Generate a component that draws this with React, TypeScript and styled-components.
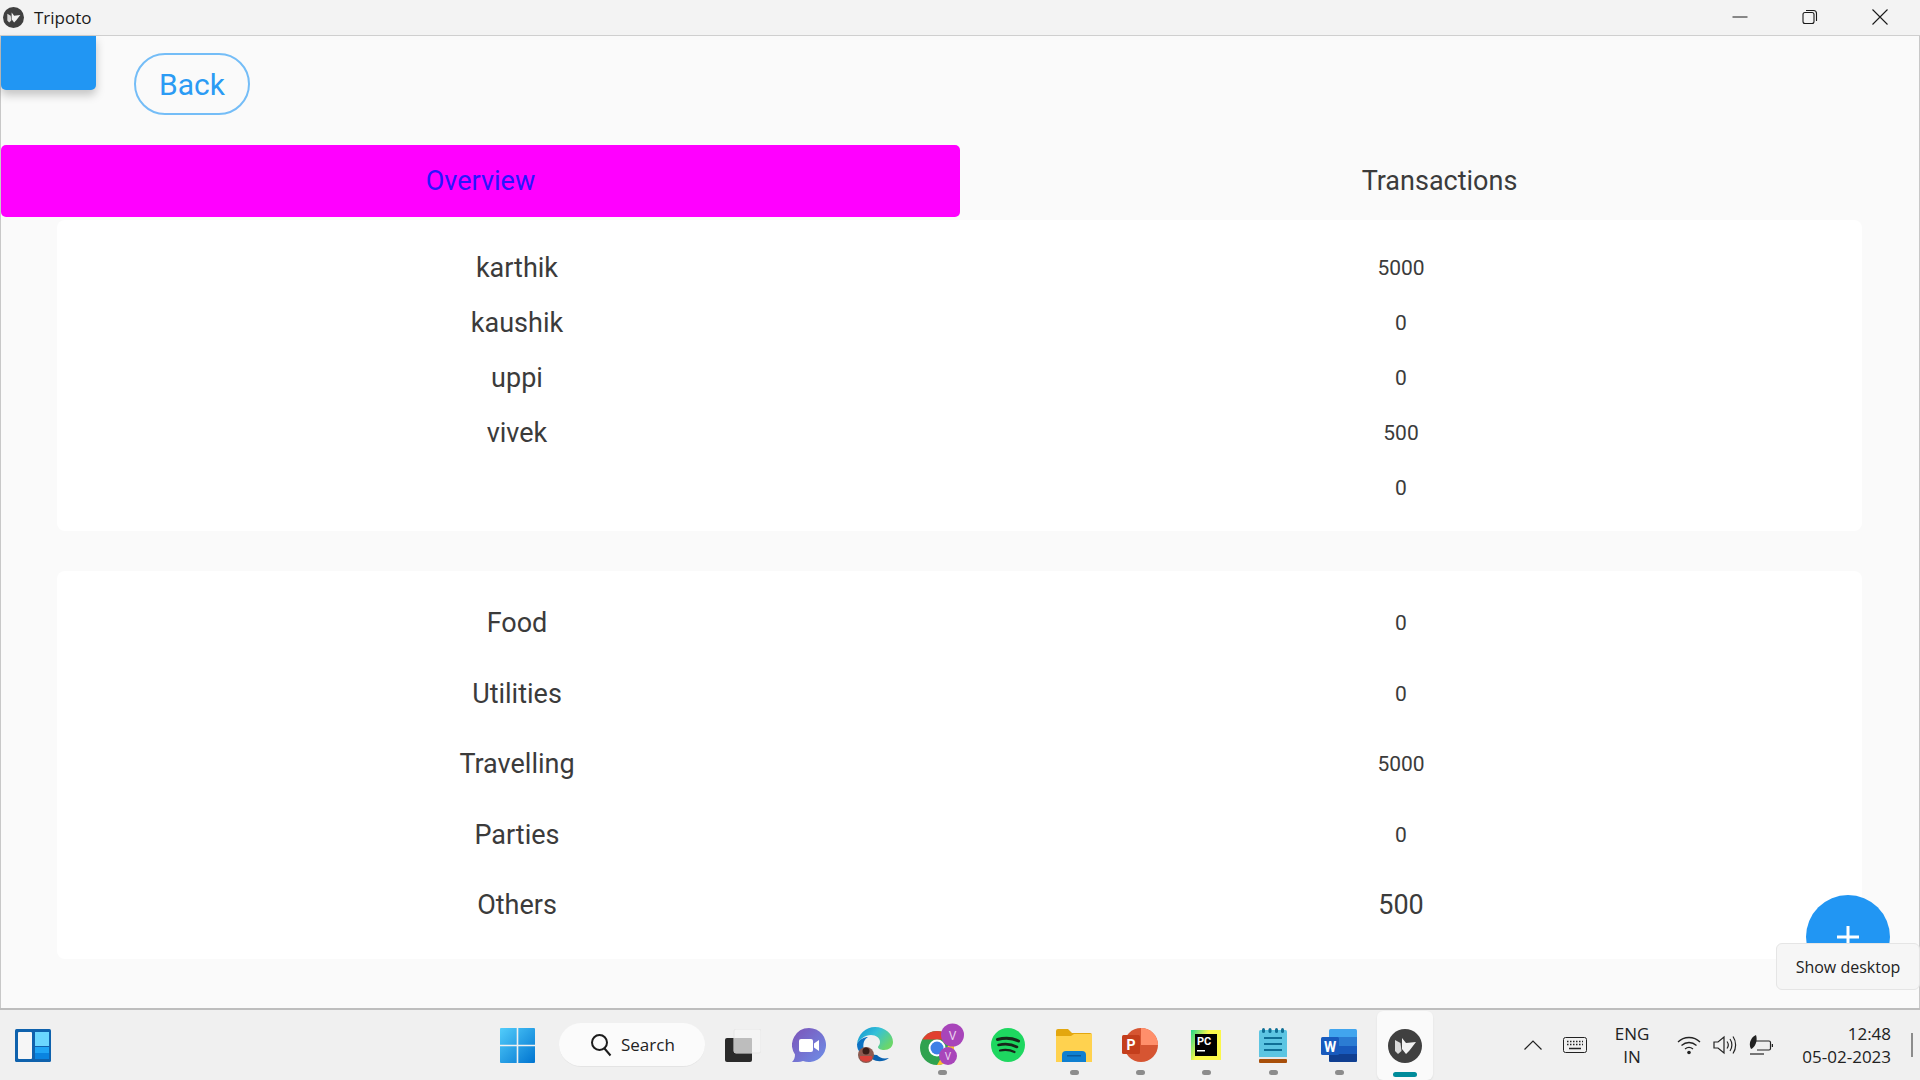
import React from "react";
import styled, { createGlobalStyle } from "styled-components";

const GlobalStyle = createGlobalStyle`
  html, body {
    margin: 0;
    padding: 0;
    background: #fafafa;
    overflow: hidden;
  }
  * { box-sizing: border-box; }
`;

const people = [
  { name: "karthik", amount: "5000" },
  { name: "kaushik", amount: "0" },
  { name: "uppi", amount: "0" },
  { name: "vivek", amount: "500" },
  { name: "", amount: "0" },
];

const categories = [
  { name: "Food", amount: "0" },
  { name: "Utilities", amount: "0" },
  { name: "Travelling", amount: "5000" },
  { name: "Parties", amount: "0" },
  { name: "Others", amount: "500", large: true },
];

const KivyLogo = ({ size }: { size: number }) => (
  <svg width={size} height={size} viewBox="0 0 34 34">
    <circle cx="17" cy="17" r="17" fill="#404040" />
    <path d="M7 11l5.500 3 1 8-3.500 3-3-3z" fill="#d8d8d8" />
    <path d="M14 9l4 5 10-1-6.500 8.500-3.500 3.500-4-5z" fill="#f2f2f2" />
  </svg>
);

const WidgetsIcon = () => (
  <svg width="36" height="33" viewBox="0 0 36 33">
    <rect width="36" height="33" rx="1.500" fill="#0f62ad" />
    <rect x="3" y="3" width="14" height="27" rx="1" fill="#f6f6f6" />
    <rect x="20" y="3" width="14" height="14" fill="#6bd7ff" />
    <rect x="20" y="18" width="14" height="6" fill="#1fa5f5" />
    <rect x="20" y="24" width="14" height="6" fill="#0a84e0" />
  </svg>
);

const StartIcon = () => (
  <svg width="35" height="35" viewBox="0 0 35 35">
    <defs>
      <linearGradient id="startGrad" x1="0" y1="0" x2="1" y2="1">
        <stop offset="0" stopColor="#52cdfb" />
        <stop offset="1" stopColor="#0074d0" />
      </linearGradient>
    </defs>
    <path d="M1 0h15.700v16.700H0V1a1 1 0 0 1 1-1zM18.300 0H34a1 1 0 0 1 1 1v15.700H18.300zM0 18.300h16.700V35H1a1 1 0 0 1-1-1zM18.300 18.300H35V34a1 1 0 0 1-1 1H18.300z" fill="url(#startGrad)" />
  </svg>
);

const SearchGlass = () => (
  <svg width="22" height="24" viewBox="0 0 22 24" fill="none" stroke="#1c1c1c" strokeWidth="2">
    <circle cx="9.500" cy="9.500" r="7.500" />
    <path d="M14.500 15.500l6 7" />
  </svg>
);

const TaskViewIcon = () => (
  <svg width="36" height="33" viewBox="0 0 36 33">
    <rect x="0" y="9" width="27" height="24" rx="2" fill="#2a2a2a" />
    <rect x="9" y="0" width="27" height="24" rx="2" fill="#f4f4f4" fillOpacity="0.85" stroke="#e6e6e6" />
    <rect x="9" y="9" width="18" height="15" rx="1" fill="#bdbdbd" />
  </svg>
);

const ChatIcon = () => (
  <svg width="34" height="34" viewBox="0 0 34 34">
    <defs>
      <linearGradient id="chatGrad" x1="0" y1="0" x2="1" y2="1">
        <stop offset="0" stopColor="#7d53b8" />
        <stop offset="1" stopColor="#6d8fe8" />
      </linearGradient>
    </defs>
    <path d="M17 0a17 17 0 1 1-6 32.900c-3 1.100-7 1.100-11 1.100 2-2 3-4 3-7.500A17 17 0 0 1 17 0z" fill="url(#chatGrad)" />
    <rect x="7" y="11" width="14" height="13" rx="2" fill="#fff" />
    <path d="M22 15.500l5-3.500v11l-5-3.500z" fill="#fff" />
  </svg>
);

const EdgeIcon = () => (
  <svg width="36" height="36" viewBox="0 0 36 36">
    <defs>
      <linearGradient id="edgeGrad" x1="0" y1="0" x2="1" y2="0.600">
        <stop offset="0" stopColor="#0d8fd0" />
        <stop offset="0.500" stopColor="#35c1d8" />
        <stop offset="1" stopColor="#6bd66a" />
      </linearGradient>
    </defs>
    <path d="M0 17C1 7 9 0 18 0c10 0 18 7 18 15 0 5-4 8-9 8-3 0-6-1-6-3 0-1 2-2 2-5 0-4-4-7-9-7-6 0-11 4-14 9z" fill="url(#edgeGrad)" />
    <path d="M0 17c3-5 7-7 11-7-5 3-6 9-3 16H4C1 24 0 21 0 17z" fill="#0c72c4" />
    <path d="M10 27c4 7 14 10 22 4-6 1-9 0-12-3z" fill="#0a62b0" />
    <circle cx="9" cy="28" r="8" fill="#8c5a50" />
    <path d="M3 29h12v3a8 8 0 0 1-12 0z" fill="#d8413a" />
    <circle cx="9" cy="24" r="3.500" fill="#3a1d18" />
  </svg>
);

const ChromeIcon = () => (
  <svg width="44" height="44" viewBox="0 0 44 44">
    <circle cx="17" cy="25" r="17" fill="#2fa24f" />
    <path d="M2.300 16.500A17 17 0 0 1 31.700 16.500H17z" fill="#e1402f" />
    <path d="M31.700 16.500A17 17 0 0 1 17 42l7.400-12.700 7.300-12.800z" fill="#fbc02d" />
    <circle cx="17" cy="25" r="8.500" fill="#fff" />
    <circle cx="17" cy="25" r="6.500" fill="#3d7fe6" />
    <circle cx="32.500" cy="12" r="11.500" fill="#a845ba" />
    <text x="32.500" y="16.500" textAnchor="middle" fontFamily="Roboto, sans-serif" fontSize="12" fill="#ead3ee">V</text>
    <circle cx="28" cy="33" r="9" fill="#a845ba" />
    <text x="28" y="37" textAnchor="middle" fontFamily="Roboto, sans-serif" fontSize="10" fill="#ead3ee">V</text>
  </svg>
);

const SpotifyIcon = () => (
  <svg width="34" height="34" viewBox="0 0 34 34" fill="none" stroke="#17261a" strokeLinecap="round">
    <circle cx="17" cy="17" r="17" fill="#1ed760" stroke="none" />
    <path d="M6.500 11.500c7-2 15-1.500 21 1.500" strokeWidth="3" />
    <path d="M7.500 17c6-1.500 13-1 18.500 2" strokeWidth="2.600" />
    <path d="M9 22.500c5-1 10-.7 14.500 1.500" strokeWidth="2.200" />
  </svg>
);

const ExplorerIcon = () => (
  <svg width="36" height="33" viewBox="0 0 36 33">
    <path d="M0 2a2 2 0 0 1 2-2h10l4 4h18a2 2 0 0 1 2 2v4H0z" fill="#e3a70f" />
    <path d="M0 7h15l3-2h18v28H0z" fill="#ffd24f" />
    <path d="M6 33v-7a4 4 0 0 1 4-4h16a4 4 0 0 1 4 4v7z" fill="#0f7fd0" />
    <rect x="11" y="26" width="14" height="1.500" fill="#0a5a9c" />
  </svg>
);

const PowerPointIcon = () => (
  <svg width="36" height="34" viewBox="0 0 36 34">
    <circle cx="19" cy="17" r="17" fill="#d65532" />
    <path d="M19 0a17 17 0 0 1 17 17H19z" fill="#ff8f6b" />
    <rect x="0" y="7" width="18" height="19" rx="1.500" fill="#c43e1c" />
    <text x="9" y="22" textAnchor="middle" fontFamily="Roboto, sans-serif" fontWeight="700" fontSize="14" fill="#fff">P</text>
  </svg>
);

const PyCharmIcon = () => (
  <svg width="30" height="30" viewBox="0 0 30 30">
    <defs>
      <linearGradient id="pyGrad" x1="0" y1="0" x2="1" y2="0.500">
        <stop offset="0" stopColor="#21d789" />
        <stop offset="0.500" stopColor="#fcf84a" />
      </linearGradient>
    </defs>
    <rect width="30" height="30" fill="url(#pyGrad)" />
    <rect x="4" y="4" width="22" height="22" fill="#000" />
    <text x="6" y="15" fontFamily="Roboto, sans-serif" fontWeight="700" fontSize="11" fill="#fff">PC</text>
    <rect x="6" y="20" width="8" height="1.500" fill="#fff" />
  </svg>
);

const NotepadIcon = () => (
  <svg width="28" height="35" viewBox="0 0 28 35">
    <rect x="0" y="2" width="28" height="28" rx="1.500" fill="#5cc5e2" />
    <rect x="0" y="29" width="28" height="2" fill="#e8e8e8" />
    <rect x="0" y="31" width="28" height="4" rx="1" fill="#a84f0a" />
    <g fill="#0f6f96">
      <rect x="3" y="0" width="3" height="5" rx="1.500" />
      <rect x="9.500" y="0" width="3" height="5" rx="1.500" />
      <rect x="16" y="0" width="3" height="5" rx="1.500" />
      <rect x="22" y="0" width="3" height="5" rx="1.500" />
      <rect x="5" y="9" width="18" height="2" />
      <rect x="5" y="15" width="18" height="2" />
      <rect x="5" y="21" width="18" height="2" />
    </g>
  </svg>
);

const WordIcon = () => (
  <svg width="36" height="33" viewBox="0 0 36 33">
    <rect x="8" y="0" width="28" height="33" rx="1.500" fill="#41a5ee" />
    <rect x="8" y="8" width="28" height="9" fill="#2b7cd3" />
    <rect x="8" y="17" width="28" height="8" fill="#185abd" />
    <path d="M8 25h28v6.500a1.500 1.500 0 0 1-1.500 1.500h-25A1.500 1.500 0 0 1 8 31.500z" fill="#103f91" />
    <rect x="0" y="8" width="18" height="18" rx="1.500" fill="#185abd" />
    <text x="9" y="22.500" textAnchor="middle" fontFamily="Roboto, sans-serif" fontWeight="700" fontSize="14" fill="#fff">W</text>
  </svg>
);

const dockIcons = [
  { id: "taskview", icon: <TaskViewIcon /> },
  { id: "chat", icon: <ChatIcon /> },
  { id: "edge", icon: <EdgeIcon /> },
  { id: "chrome", icon: <ChromeIcon />, running: true },
  { id: "spotify", icon: <SpotifyIcon /> },
  { id: "explorer", icon: <ExplorerIcon />, running: true },
  { id: "powerpoint", icon: <PowerPointIcon />, running: true },
  { id: "pycharm", icon: <PyCharmIcon />, running: true },
  { id: "notepad", icon: <NotepadIcon />, running: true },
  { id: "word", icon: <WordIcon />, running: true },
];

const App = () => (
  <>
    <GlobalStyle />
    <Window>
      <TitleBar>
        <KivyLogo size={21} />
        <TitleText>Tripoto</TitleText>
        <WindowControls>
          <WindowButton>
            <svg width="16" height="16" viewBox="0 0 16 16" stroke="#1a1a1a" strokeWidth="1">
              <path d="M0.500 8h15" />
            </svg>
          </WindowButton>
          <WindowButton>
            <svg width="16" height="16" viewBox="0 0 16 16" fill="none" stroke="#1a1a1a" strokeWidth="1.100">
              <rect x="1" y="3.500" width="11" height="11" rx="2" />
              <path d="M4 1.500h7.500a3 3 0 0 1 3 3V12" />
            </svg>
          </WindowButton>
          <WindowButton>
            <svg width="16" height="16" viewBox="0 0 16 16" stroke="#1a1a1a" strokeWidth="1.100">
              <path d="M0.500 0.500l15 15M15.500 0.500l-15 15" />
            </svg>
          </WindowButton>
        </WindowControls>
      </TitleBar>

      <Content>
        <TopRow>
          <RaisedButton />
          <BackButton>Back</BackButton>
        </TopRow>

        <Tabs>
          <Tab $active>Overview</Tab>
          <Tab>Transactions</Tab>
        </Tabs>

        <Cards>
          <Card $height={311} $paddingTop={20}>
            {people.map((p, i) => (
              <PersonRow key={i}>
                <Name>{p.name}</Name>
                <Amount>{p.amount}</Amount>
              </PersonRow>
            ))}
          </Card>
          <Card $height={388} $paddingTop={17}>
            {categories.map((c) => (
              <CategoryRow key={c.name}>
                <Name>{c.name}</Name>
                <Amount $large={c.large}>{c.amount}</Amount>
              </CategoryRow>
            ))}
          </Card>
        </Cards>

        <Fab>
          <svg width="22" height="22" viewBox="0 0 22 22" fill="#fff">
            <rect x="9.500" y="0" width="3" height="22" />
            <rect x="0" y="9.500" width="22" height="3" />
          </svg>
        </Fab>
        <Tooltip>Show desktop</Tooltip>
      </Content>

      <Taskbar>
        <WidgetsSlot>
          <WidgetsIcon />
        </WidgetsSlot>
        <StartSlot>
          <StartIcon />
        </StartSlot>
        <SearchPill>
          <SearchGlass />
          <span>Search</span>
        </SearchPill>
        <Dock>
          {dockIcons.map((d) => (
            <DockItem key={d.id}>
              {d.icon}
              {d.running && <RunningDot />}
            </DockItem>
          ))}
          <ActiveDockItem>
            <KivyLogo size={34} />
            <ActiveBar />
          </ActiveDockItem>
        </Dock>
        <Tray>
          <svg width="18" height="10" viewBox="0 0 18 10" fill="none" stroke="#222" strokeWidth="1.200">
            <path d="M0.500 9.500L9 1l8.500 8.500" />
          </svg>
          <KeyboardSlot>
            <svg width="24" height="16" viewBox="0 0 24 16" fill="none" stroke="#222" strokeWidth="1">
              <rect x="0.500" y="0.500" width="23" height="15" rx="2" />
              <path d="M4 4.500h16M4 7.500h16" strokeDasharray="1.500 1.500" strokeWidth="1.500" />
              <path d="M6 11.500h12" strokeWidth="1.500" />
            </svg>
          </KeyboardSlot>
          <Language>
            <span>ENG</span>
            <span>IN</span>
          </Language>
          <TrayIcons>
            <svg width="24" height="20" viewBox="0 0 24 20" fill="none" stroke="#222" strokeWidth="1.300">
              <path d="M1 7c6-6 16-6 22 0" />
              <path d="M4.500 10.500c4.500-4 10.500-4 15 0" />
              <path d="M8 14c2.500-2 5.500-2 8 0" />
              <circle cx="12" cy="17.500" r="1.800" fill="#222" stroke="none" />
            </svg>
            <svg width="24" height="20" viewBox="0 0 24 20" fill="none" stroke="#222" strokeWidth="1.200">
              <path d="M1 7h4l6-5v16l-6-5H1z" />
              <path d="M14 6.500c1.500 2 1.500 5 0 7" />
              <path d="M17 4c2.500 3.500 2.500 8.500 0 12" />
              <path d="M20 1.500c3.500 5 3.500 12 0 17" />
            </svg>
            <svg width="24" height="20" viewBox="0 0 24 20" fill="none" stroke="#222" strokeWidth="1.200">
              <path d="M6 6h14a1.500 1.500 0 0 1 1.500 1.500v6a1.500 1.500 0 0 1-1.500 1.500H8" />
              <path d="M23.500 9v3" strokeWidth="1.500" />
              <path d="M1 19h14" />
              <path d="M7 0C2 2-1 9 2 14c4-2 7-8 5-14z" fill="#222" stroke="none" />
            </svg>
          </TrayIcons>
          <Clock>
            <span>12:48</span>
            <span>05-02-2023</span>
          </Clock>
          <ShowDesktopLine />
        </Tray>
      </Taskbar>
    </Window>
  </>
);

const Window = styled.div`
  width: 1920px;
  height: 1080px;
  display: flex;
  flex-direction: column;
  background: #fafafa;
  color: #3b3b3b;
  font-family: Roboto, "Liberation Sans", sans-serif;
`;

const TitleBar = styled.header`
  height: 36px;
  flex: none;
  display: flex;
  align-items: center;
  gap: 10px;
  padding: 0 0 1px 3px;
  background: #f3f3f3;
  border-bottom: 1px solid #cfcfcf;
`;

const TitleText = styled.span`
  font-family: "Open Sans", sans-serif;
  font-size: 17px;
  color: #1a1a1a;
`;

const WindowControls = styled.div`
  margin-left: auto;
  display: flex;
  padding-right: 5px;
`;

const WindowButton = styled.div`
  width: 70px;
  height: 34px;
  display: flex;
  align-items: center;
  justify-content: center;
`;

const Content = styled.main`
  position: relative;
  flex: 1;
  min-height: 0;
  border-left: 1px solid #c8c8c8;
  border-right: 1px solid #c8c8c8;
`;

const TopRow = styled.div`
  height: 109px;
  display: flex;
  align-items: flex-start;
  gap: 38px;
`;

const RaisedButton = styled.div`
  width: 95px;
  height: 54px;
  border-radius: 0 0 5px 5px;
  background: #2196f3;
  box-shadow: 0 5px 10px rgba(0, 0, 0, 0.22);
`;

const BackButton = styled.button`
  width: 116px;
  height: 62px;
  margin-top: 17px;
  padding: 0;
  border: 2px solid #74bdf7;
  border-radius: 31px;
  background: transparent;
  color: #2b9bf4;
  font-family: inherit;
  font-size: 30px;
`;

const Tabs = styled.nav`
  display: grid;
  grid-template-columns: 959px 1fr;
  height: 72px;
`;

const Tab = styled.div<{ $active?: boolean }>`
  display: flex;
  align-items: center;
  justify-content: center;
  font-size: 27px;
  border-radius: 5px;
  background: ${({ $active }) => ($active ? "#ff00ff" : "transparent")};
  color: ${({ $active }) => ($active ? "#2a14ff" : "#3b3b3b")};
`;

const Cards = styled.section`
  display: flex;
  flex-direction: column;
  gap: 40px;
  margin: 3px 57px 0 56px;
`;

const Card = styled.div<{ $height: number; $paddingTop: number }>`
  height: ${({ $height }) => $height}px;
  padding-top: ${({ $paddingTop }) => $paddingTop}px;
  border-radius: 8px;
  background: #ffffff;
`;

const PersonRow = styled.div`
  display: grid;
  grid-template-columns: 920px 848px;
  align-items: center;
  height: 55px;
  text-align: center;
`;

const CategoryRow = styled(PersonRow)`
  height: 70.5px;
`;

const Name = styled.span`
  font-size: 27px;
`;

const Amount = styled.span<{ $large?: boolean }>`
  font-size: ${({ $large }) => ($large ? "27px" : "21px")};
`;

const Fab = styled.div`
  position: absolute;
  right: 29px;
  top: 859px;
  width: 84px;
  height: 84px;
  display: flex;
  align-items: center;
  justify-content: center;
  border-radius: 50%;
  background: #2196f3;
`;

const Tooltip = styled.div`
  position: absolute;
  right: -1px;
  top: 907px;
  width: 144px;
  height: 47px;
  display: flex;
  align-items: center;
  justify-content: center;
  border: 1px solid #e5e5e5;
  border-radius: 6px;
  background: #f6f6f6;
  color: #222;
  font-family: "Open Sans", sans-serif;
  font-size: 16px;
`;

const Taskbar = styled.footer`
  position: relative;
  height: 72px;
  flex: none;
  display: flex;
  align-items: center;
  border-top: 2px solid #bdbdbd;
  background: #f0f0f0;
  font-family: "Open Sans", sans-serif;
  color: #222;
`;

const WidgetsSlot = styled.div`
  width: 36px;
  height: 33px;
  margin-left: 15px;
`;

const StartSlot = styled.div`
  width: 35px;
  height: 35px;
  margin-left: 449px;
`;

const SearchPill = styled.div`
  width: 146px;
  height: 44px;
  margin-left: 24px;
  display: flex;
  align-items: center;
  gap: 9px;
  padding-left: 31px;
  border-radius: 22px;
  background: #fbfbfb;
  border-bottom: 1px solid #e4e4e4;
  font-size: 17px;
`;

const Dock = styled.div`
  display: grid;
  grid-template-columns: repeat(11, 66.2px);
  margin-left: 5px;
  height: 70px;
`;

const DockItem = styled.div`
  position: relative;
  display: flex;
  align-items: center;
  justify-content: center;
`;

const RunningDot = styled.span`
  position: absolute;
  left: 50%;
  bottom: 5px;
  width: 9px;
  height: 5px;
  margin-left: -4px;
  border-radius: 3px;
  background: #8c8c8c;
`;

const ActiveDockItem = styled(DockItem)`
  margin: 1px 5px 0;
  border-radius: 6px;
  background: #fafafa;
  box-shadow: 0 1px 2px rgba(0, 0, 0, 0.08);
`;

const ActiveBar = styled.span`
  position: absolute;
  left: 50%;
  bottom: 3px;
  width: 24px;
  height: 5px;
  margin-left: -12px;
  border-radius: 3px;
  background: #008b9a;
`;

const Tray = styled.div`
  margin-left: 86px;
  display: flex;
  align-items: center;
  flex: 1;
`;

const KeyboardSlot = styled.div`
  display: flex;
  margin-left: 21px;
`;

const Language = styled.div`
  width: 50px;
  margin-left: 20px;
  display: flex;
  flex-direction: column;
  align-items: center;
  font-size: 17px;
  line-height: 23px;
`;

const TrayIcons = styled.div`
  display: flex;
  gap: 12px;
  margin-left: 20px;
`;

const Clock = styled.div`
  width: 118px;
  display: flex;
  flex-direction: column;
  align-items: flex-end;
  font-size: 17px;
  line-height: 23px;
`;

const ShowDesktopLine = styled.span`
  width: 2px;
  height: 24px;
  margin-left: 20px;
  background: #8c8c8c;
`;

export default App;
